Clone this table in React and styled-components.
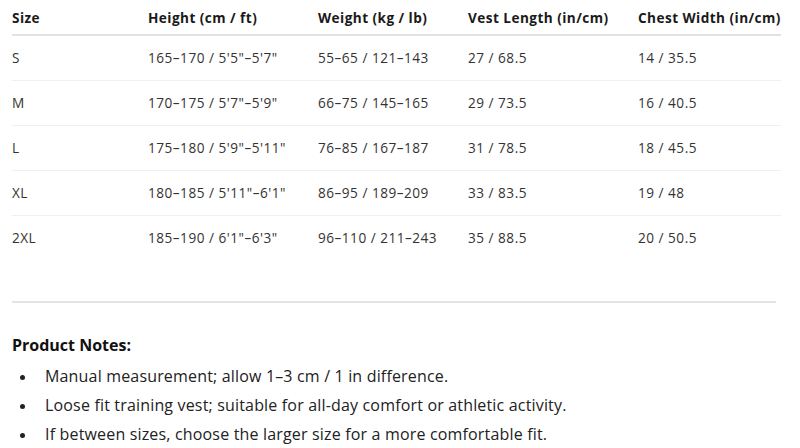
import React from "react";
import styled, { createGlobalStyle } from "styled-components";

const Global = createGlobalStyle`
  body {
    margin: 0;
    background: #fff;
    font-family: "Open Sans", "Noto Sans", sans-serif;
    color: #222;
  }
`;

const Page = styled.div`
  padding: 0 12px;
  width: 800px;
  box-sizing: border-box;
`;

const Table = styled.table`
  width: 769px;
  border-collapse: collapse;
  table-layout: fixed;
  font-size: 13.6px;
  letter-spacing: 0.5px;
`;

const Head = styled.th`
  width: ${p => p.w}px;
  text-align: left;
  font-weight: 700;
  color: #1a1a1a;
  height: 35px;
  padding: 0;
  border-bottom: 2px solid #e2e2e2;
  box-sizing: border-box;
  vertical-align: middle;
  letter-spacing: 0.45px;
  white-space: nowrap;
`;

const Row = styled.tr`
  border-bottom: ${p => (p.last ? "none" : "1px solid #efefef")};
`;

const Cell = styled.td`
  height: 42px;
  padding: 0 0 2px;
  color: #333;
  vertical-align: middle;
`;

const Divider = styled.hr`
  margin: 41px 0 0;
  width: 764px;
  border: 0;
  border-top: 2px solid #e4e4e4;
`;

const Notes = styled.section`
  padding-top: 31px;
`;

const Title = styled.h3`
  margin: 0 0 6px;
  font-size: 16px;
  font-weight: 700;
  color: #111;
`;

const List = styled.ul`
  margin: 0;
  padding: 0;
  list-style: none;
  font-size: 16px;
  letter-spacing: 0.17px;
  color: #222;
`;

const Item = styled.li`
  display: flex;
  align-items: center;
  line-height: 29px;

  &::before {
    content: "";
    width: 5px;
    height: 5px;
    border-radius: 50%;
    background: #222;
    margin: 1px 20px 0 8px;
    flex: none;
  }
`;

const columns = [
  ["Size", 136],
  ["Height (cm / ft)", 170],
  ["Weight (kg / lb)", 150],
  ["Vest Length (in/cm)", 170],
  ["Chest Width (in/cm)", 143],
];

const rows = [
  ["S", `165–170 / 5'5"–5'7"`, "55–65 / 121–143", "27 / 68.5", "14 / 35.5"],
  ["M", `170–175 / 5'7"–5'9"`, "66–75 / 145–165", "29 / 73.5", "16 / 40.5"],
  ["L", `175–180 / 5'9"–5'11"`, "76–85 / 167–187", "31 / 78.5", "18 / 45.5"],
  ["XL", `180–185 / 5'11"–6'1"`, "86–95 / 189–209", "33 / 83.5", "19 / 48"],
  ["2XL", `185–190 / 6'1"–6'3"`, "96–110 / 211–243", "35 / 88.5", "20 / 50.5"],
];

const notes = [
  "Manual measurement; allow 1–3 cm / 1 in difference.",
  "Loose fit training vest; suitable for all-day comfort or athletic activity.",
  "If between sizes, choose the larger size for a more comfortable fit.",
];

const App = () => (
  <Page>
    <Global />
    <Table>
      <thead>
        <tr>
          {columns.map(([label, w]) => (
            <Head key={label} w={w}>
              {label}
            </Head>
          ))}
        </tr>
      </thead>
      <tbody>
        {rows.map((r, i) => (
          <Row key={r[0]} last={i === rows.length - 1}>
            {r.map((c, j) => (
              <Cell key={j}>{c}</Cell>
            ))}
          </Row>
        ))}
      </tbody>
    </Table>
    <Divider />
    <Notes>
      <Title>Product Notes:</Title>
      <List>
        {notes.map(n => (
          <Item key={n}>{n}</Item>
        ))}
      </List>
    </Notes>
  </Page>
);

export default App;
